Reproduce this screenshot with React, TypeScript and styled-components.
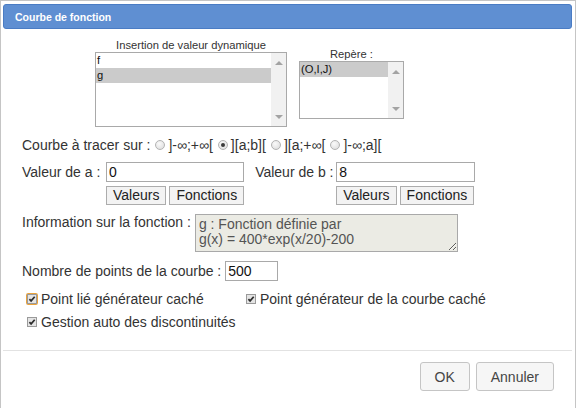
import React from "react";
import styled, { createGlobalStyle } from "styled-components";

const GlobalStyle = createGlobalStyle`
  html, body {
    margin: 0;
    padding: 0;
    background: #fff;
  }
  body {
    font-family: "Liberation Sans", Arial, sans-serif;
    overflow: hidden;
  }
`;

const Dialog = styled.div`
  width: 576px;
  height: 408px;
  box-sizing: border-box;
  border: 1px solid #c5c5c5;
  border-bottom: none;
  padding: 3px 3px 0 2px;
  background: #fff;
  color: #333;
`;

const TitleBar = styled.div`
  height: 25px;
  box-sizing: border-box;
  display: flex;
  align-items: center;
  padding-left: 11px;
  background: #5f8fd2;
  border: 1px solid #4a7cc4;
  border-radius: 3px;
  color: #fff;
  font-size: 10.5px;
  font-weight: bold;
`;

const Content = styled.div`
  padding: 10px 0 0 19px;
  font-size: 14px;
  line-height: 16px;
`;

const ListRow = styled.div`
  display: flex;
  align-items: center;
  gap: 12px;
  margin-left: 73px;
`;

const ListGroup = styled.div`
  display: flex;
  flex-direction: column;
  align-items: center;
`;

const SmallLabel = styled.div`
  font-size: 11.2px;
  line-height: 13px;
  color: #333;
`;

const ListBox = styled.div<{ $w: number; $h: number }>`
  width: ${(p) => p.$w}px;
  height: ${(p) => p.$h}px;
  box-sizing: border-box;
  border: 1px solid #a9a9a9;
  display: flex;
  background: #fff;
`;

const Options = styled.div`
  flex: 1;
`;

const Option = styled.div<{ $selected?: boolean }>`
  height: 15px;
  line-height: 15px;
  padding-left: 1px;
  font-size: 11.2px;
  color: #111;
  background: ${(p) => (p.$selected ? "#cbcbcb" : "transparent")};
`;

const ScrollTrack = styled.div`
  width: 15px;
  background: #f1f1f1;
  display: flex;
  flex-direction: column;
  justify-content: space-between;
  align-items: center;
  padding: 8px 0 7px;
  box-sizing: border-box;
`;

const Arrow = styled.span<{ $down?: boolean }>`
  width: 0;
  height: 0;
  border-left: 4px solid transparent;
  border-right: 4px solid transparent;
  ${(p) =>
    p.$down
      ? "border-top: 4px solid #a3a3a3;"
      : "border-bottom: 4px solid #a3a3a3;"}
`;

const RadioRow = styled.div`
  display: flex;
  align-items: center;
  margin-top: 10px;
  height: 16px;
`;

const Radio = styled.span<{ $checked?: boolean }>`
  width: 10px;
  height: 10px;
  box-sizing: border-box;
  border-radius: 50%;
  border: 1px solid #b3b3b3;
  background: radial-gradient(circle at 40% 35%, #fafafa, #d9d9d9);
  margin: 0 3px 0 5px;
  display: inline-flex;
  align-items: center;
  justify-content: center;
  &::after {
    content: "";
    width: 4px;
    height: 4px;
    border-radius: 50%;
    background: ${(p) => (p.$checked ? "#3a3a3a" : "transparent")};
  }
`;

const ValueRow = styled.div`
  display: flex;
  gap: 11px;
  margin-top: 9px;
`;

const FieldGroup = styled.div`
  display: flex;
  align-items: flex-start;
`;

const FieldLabel = styled.span<{ $w: number }>`
  width: ${(p) => p.$w}px;
  line-height: 20px;
  white-space: nowrap;
`;

const Stack = styled.div`
  display: flex;
  flex-direction: column;
  gap: 4px;
`;

const TextInput = styled.input<{ $w: number }>`
  width: ${(p) => p.$w}px;
  height: 20px;
  box-sizing: border-box;
  border: 1px solid #a9a9a9;
  padding: 0 2px;
  margin: 0;
  font-family: "Liberation Sans", Arial, sans-serif;
  font-size: 14px;
  color: #111;
  outline: none;
`;

const ButtonPair = styled.div`
  display: flex;
  gap: 3px;
`;

const SmallButton = styled.button`
  height: 19px;
  box-sizing: border-box;
  padding: 0 6px;
  margin: 0;
  border: 1px solid #acacac;
  background: #f3f3f3;
  font-family: "Liberation Sans", Arial, sans-serif;
  font-size: 14px;
  line-height: 17px;
  color: #222;
`;

const InfoRow = styled.div`
  display: flex;
  align-items: flex-start;
  margin-top: 9px;
`;

const InfoLabel = styled.span`
  margin-right: 4px;
  white-space: nowrap;
`;

const InfoText = styled.textarea`
  width: 263px;
  height: 38px;
  box-sizing: border-box;
  margin: 0;
  padding: 2px 3px;
  border: 1px solid #a9a9a9;
  background: #ebebe4;
  color: #545454;
  font-family: "Liberation Sans", Arial, sans-serif;
  font-size: 14px;
  line-height: 15px;
  overflow: hidden;
  outline: none;
`;

const CountRow = styled.div`
  display: flex;
  align-items: center;
  margin-top: 9px;
`;

const CheckGrid = styled.div`
  display: grid;
  grid-template-columns: 219px auto;
  row-gap: 7px;
  margin-top: 10px;
  padding-left: 4px;
`;

const CheckItem = styled.label`
  display: flex;
  align-items: center;
  gap: 3px;
  height: 16px;
  white-space: nowrap;
`;

const CheckSvg = styled.svg`
  flex: none;
`;

const ButtonPane = styled.div`
  margin-top: 20px;
  border-top: 1px solid #e2e2e2;
  display: flex;
  justify-content: flex-end;
  gap: 6px;
  padding: 11px 18px 0 0;
`;

const DialogButton = styled.button`
  height: 29px;
  box-sizing: border-box;
  padding: 0 14px;
  border: 1px solid #c5c5c5;
  border-radius: 3px;
  background: #f6f6f6;
  color: #454545;
  font-family: "Liberation Sans", Arial, sans-serif;
  font-size: 14px;
`;

function CheckBox({ focused }: { focused?: boolean }) {
  return (
    <CheckSvg width="12" height="12" viewBox="0 0 12 12">
      {focused && (
        <rect x="0.75" y="0.75" width="10.5" height="10.5" rx="1.5" fill="none" stroke="#e9a23b" strokeWidth="1.5" />
      )}
      <rect x="1.5" y="1.5" width="9" height="9" fill="#e4e4e4" stroke="#9a9a9a" />
      <path d="M3.4 6.1 L5.1 7.9 L8.7 3.7" fill="none" stroke="#2c2c2c" strokeWidth="1.7" />
    </CheckSvg>
  );
}

const intervals = ["]-∞;+∞[", "][a;b][", "][a;+∞[", "]-∞;a]["];

export default function App() {
  return (
    <>
      <GlobalStyle />
      <Dialog>
        <TitleBar>Courbe de fonction</TitleBar>
        <Content>
          <ListRow>
            <ListGroup>
              <SmallLabel>Insertion de valeur dynamique</SmallLabel>
              <ListBox $w={192} $h={75}>
                <Options>
                  <Option>f</Option>
                  <Option $selected>g</Option>
                </Options>
                <ScrollTrack>
                  <Arrow />
                  <Arrow $down />
                </ScrollTrack>
              </ListBox>
            </ListGroup>
            <ListGroup>
              <SmallLabel>Repère :</SmallLabel>
              <ListBox $w={105} $h={58}>
                <Options>
                  <Option $selected>(O,I,J)</Option>
                </Options>
                <ScrollTrack>
                  <Arrow />
                  <Arrow $down />
                </ScrollTrack>
              </ListBox>
            </ListGroup>
          </ListRow>

          <RadioRow>
            Courbe à tracer sur :
            {intervals.map((label, i) => (
              <React.Fragment key={label}>
                <Radio $checked={i === 1} />
                {label}
              </React.Fragment>
            ))}
          </RadioRow>

          <ValueRow>
            <FieldGroup>
              <FieldLabel $w={84}>Valeur de a :</FieldLabel>
              <Stack>
                <TextInput $w={138} defaultValue="0" />
                <ButtonPair>
                  <SmallButton>Valeurs</SmallButton>
                  <SmallButton>Fonctions</SmallButton>
                </ButtonPair>
              </Stack>
            </FieldGroup>
            <FieldGroup>
              <FieldLabel $w={81}>Valeur de b :</FieldLabel>
              <Stack>
                <TextInput $w={139} defaultValue="8" />
                <ButtonPair>
                  <SmallButton>Valeurs</SmallButton>
                  <SmallButton>Fonctions</SmallButton>
                </ButtonPair>
              </Stack>
            </FieldGroup>
          </ValueRow>

          <InfoRow>
            <InfoLabel>Information sur la fonction :</InfoLabel>
            <InfoText readOnly defaultValue={"g : Fonction définie par\ng(x) = 400*exp(x/20)-200"} />
          </InfoRow>

          <CountRow>
            <InfoLabel>Nombre de points de la courbe :</InfoLabel>
            <TextInput $w={53} defaultValue="500" />
          </CountRow>

          <CheckGrid>
            <CheckItem>
              <CheckBox focused />
              Point lié générateur caché
            </CheckItem>
            <CheckItem>
              <CheckBox />
              Point générateur de la courbe caché
            </CheckItem>
            <CheckItem>
              <CheckBox />
              Gestion auto des discontinuités
            </CheckItem>
          </CheckGrid>
        </Content>
        <ButtonPane>
          <DialogButton>OK</DialogButton>
          <DialogButton>Annuler</DialogButton>
        </ButtonPane>
      </Dialog>
    </>
  );
}
